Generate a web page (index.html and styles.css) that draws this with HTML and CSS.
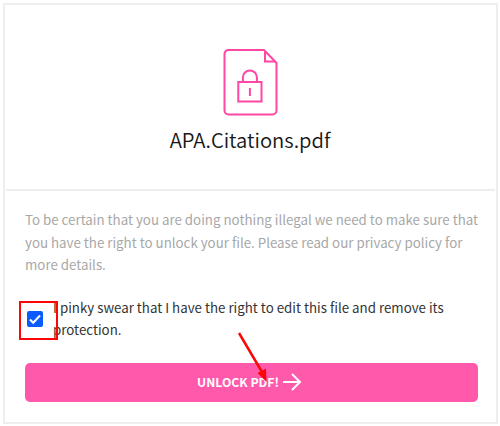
FILE: index.html
```html
<!DOCTYPE html>
<html lang="en">

<head>
    <meta charset="UTF-8">
    <title>Unlock PDF</title>
    <link rel="stylesheet" href="styles.css">
</head>

<body>
    <div class="card">
        <!-- File preview -->
        <div class="file-header">
            <svg class="file-icon" width="56" height="68" viewBox="0 0 56 68">
                <path d="M6.500 2H42L54.500 15V62.500a4 4 0 0 1-4 4H6.500a4 4 0 0 1-4-4V6a4 4 0 0 1 4-4z" />
                <path d="M43 2.500V13.500H53.500" />
                <path d="M16.300 34H39.500V53.500H16.300z" />
                <path d="M20.900 34V29.500a7 7 0 0 1 14 0v4.500" />
                <path d="M27.900 40v8" />
            </svg>
            <h1 class="file-name">APA.Citations.pdf</h1>
        </div>

        <!-- Confirmation -->
        <div class="file-body">
            <p class="notice">To be certain that you are doing nothing illegal we need to make sure that<br>you have the right to unlock your file. Please read our privacy policy for<br>more details.</p>
            <label class="confirm">
                <span class="checkbox">
                    <svg width="16" height="16" viewBox="0 0 16 16">
                        <path d="M3 8.500L6.200 11.700L13 4.500" />
                    </svg>
                    <span class="highlight"></span>
                </span>
                <span class="confirm-text">I pinky swear that I have the right to edit this file and remove its<br>protection.</span>
            </label>
            <button class="unlock-button">
                <span class="unlock-label">UNLOCK PDF!</span>
                <svg class="next-icon" width="19" height="20" viewBox="0 0 19 20">
                    <path d="M0 10H17M9 2L17 10L9 18" />
                </svg>
                <svg class="pointer" width="32" height="54" viewBox="0 0 32 54">
                    <path class="pointer-line" d="M2 2L25 41" />
                    <path class="pointer-head" d="M29.500 51L20.500 42L29 37.500z" />
                </svg>
            </button>
        </div>
    </div>
</body>

</html>
```
FILE: styles.css
```css
* {
    box-sizing: border-box;
    margin: 0;
    padding: 0;
}

body {
    font-family: "Noto Sans CJK SC", "Noto Sans", sans-serif;
    background-color: #fff;
    color: #333;
    padding: 3px 2px 2px 3px;
}

.card {
    width: 495px;
    height: 421px;
    border: 2px solid #eee;
}

.file-header {
    display: flex;
    flex-direction: column;
    align-items: center;
    height: 186px;
    margin: 0 1px;
    padding: 43px 1px 0 0;
    border-bottom: 2px solid #eee;
}

.file-icon {
    fill: none;
    stroke: #ff47a3;
    stroke-width: 2;
}

.file-name {
    margin-top: 9px;
    font-size: 20.2px;
    font-weight: 350;
    line-height: 30px;
    color: #161616;
}

.file-body {
    padding: 18px 18px 0 20px;
}

.notice,
.confirm {
    font-size: 13.32px;
    line-height: 22.5px;
    white-space: nowrap;
}

.notice {
    color: #a8a8a8;
}

.confirm {
    display: flex;
    margin-top: 20px;
}

.checkbox {
    position: relative;
    width: 16px;
    height: 16px;
    margin: 14px 10px 0 2px;
    border-radius: 2px;
    background-color: #0a5cff;
}

.checkbox svg {
    display: block;
    fill: none;
    stroke: #fff;
    stroke-width: 2;
}

/* red frame around the checkbox */
.highlight {
    position: absolute;
    top: -10px;
    left: -8px;
    width: 39px;
    height: 39px;
    border: 2px solid #fb0707;
}

.unlock-button {
    position: relative;
    display: flex;
    justify-content: center;
    align-items: center;
    gap: 4px;
    width: 453px;
    height: 39px;
    margin-top: 21px;
    padding-right: 4px;
    border: none;
    border-radius: 5px;
    background-color: #ff59ac;
    color: #fff;
    font-family: inherit;
    cursor: pointer;
}

.unlock-label {
    font-size: 12.2px;
    font-weight: 700;
}

.next-icon {
    fill: none;
    stroke: #fff;
    stroke-width: 2;
}

/* red arrow pointing at the button */
.pointer {
    position: absolute;
    top: -32px;
    left: 212px;
}

.pointer-line {
    fill: none;
    stroke: #fb0707;
    stroke-width: 2.5;
}

.pointer-head {
    fill: #fb0707;
}
```
